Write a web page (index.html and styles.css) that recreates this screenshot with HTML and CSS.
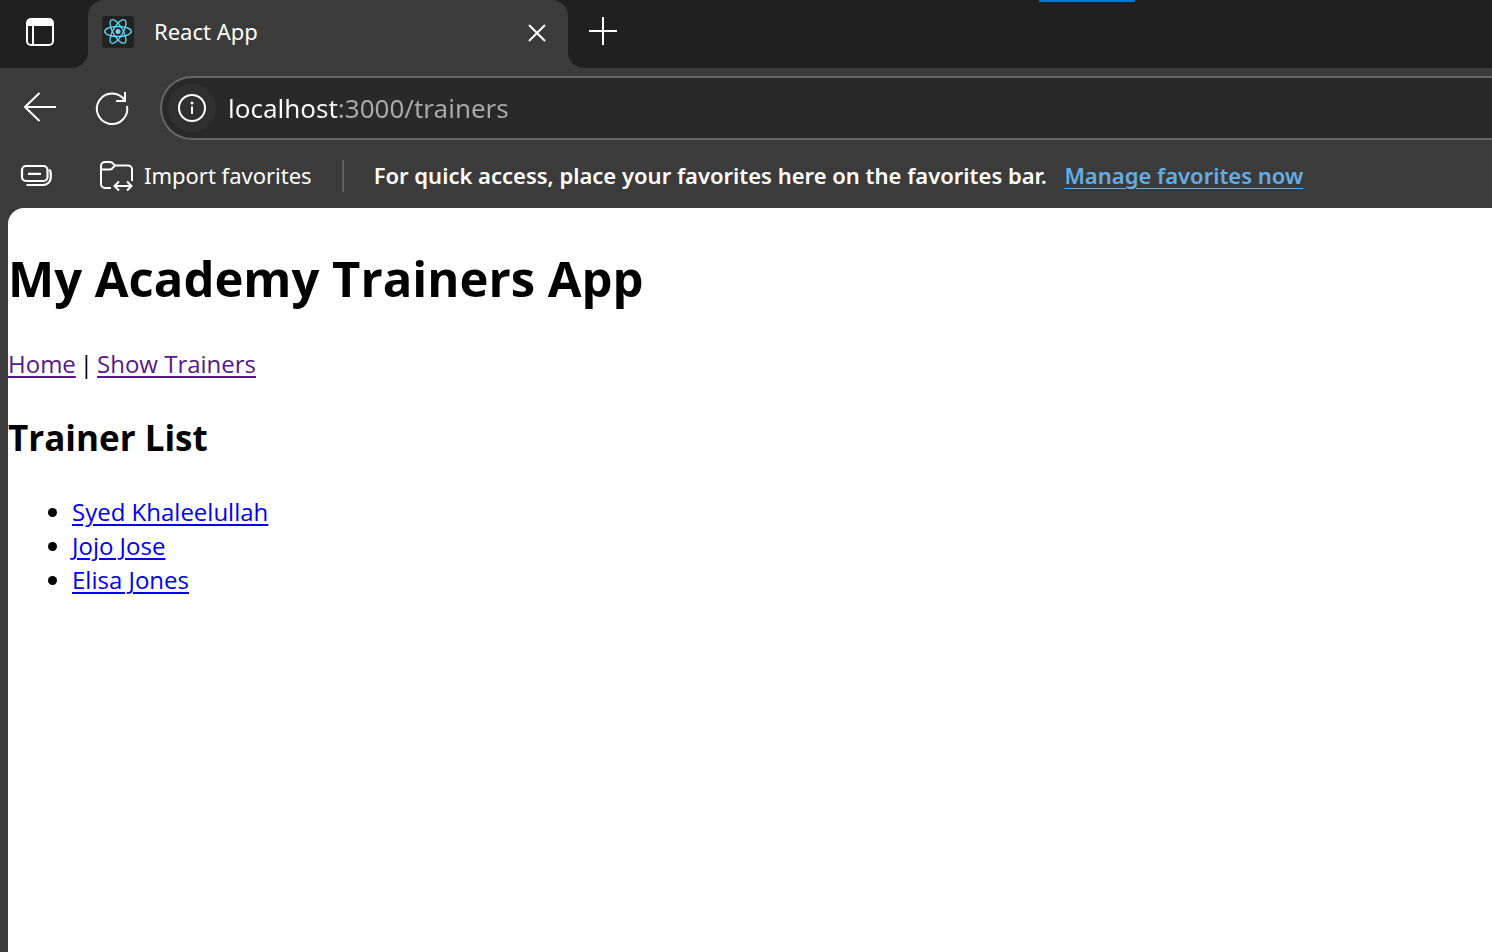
FILE: index.html
```html
<!DOCTYPE html>
<html lang="en">
<head>
<meta charset="utf-8">
<title>React App</title>
<link rel="stylesheet" href="styles.css">
</head>
<body>
<header class="browser">
  <div class="tab-strip">
    <div class="strip-start">
      <button class="icon-button" type="button" aria-label="Tab actions menu">
        <svg width="32" height="32" viewBox="0 0 32 32" fill="none" stroke="#fff"><rect x="3" y="3" width="26" height="26" rx="4" stroke-width="2"/><path d="M3 10V7a4 4 0 0 1 4-4h18a4 4 0 0 1 4 4v3z" fill="#fff" stroke="none"/><path d="M9 10v19" stroke-width="2"/></svg>
      </button>
    </div>
    <div class="tab-slot">
      <div class="tab">
        <svg class="favicon" width="32" height="32" viewBox="0 0 32 32" fill="none" stroke="#61dafb" stroke-width="1.3"><rect width="32" height="32" rx="4" fill="#222" stroke="none"/><circle cx="16" cy="15.500" r="2.500" fill="#61dafb" stroke="none"/><ellipse cx="16" cy="15.500" rx="13.300" ry="5"/><ellipse cx="16" cy="15.500" rx="13.300" ry="5" transform="rotate(60 16 15.500)"/><ellipse cx="16" cy="15.500" rx="13.300" ry="5" transform="rotate(120 16 15.500)"/></svg>
        <span class="tab-title">React App</span>
        <button class="icon-button" type="button" aria-label="Close tab">
          <svg width="32" height="32" viewBox="0 0 32 32" stroke="#fff" stroke-width="2"><path d="M8 9l16 16M24 9L8 25"/></svg>
        </button>
      </div>
    </div>
    <div class="strip-end">
      <button class="icon-button" type="button" aria-label="New tab">
        <svg width="32" height="32" viewBox="0 0 32 32" stroke="#fff" stroke-width="2"><path d="M16 2v28M2 16h28"/></svg>
      </button>
    </div>
    <span class="window-accent"></span>
  </div>

  <div class="toolbar">
    <button class="icon-button" type="button" aria-label="Back">
      <svg width="40" height="40" viewBox="0 0 40 40" fill="none" stroke="#fff" stroke-width="2"><path d="M19.500 5L5 19l14.500 14M5 19h31" stroke-linejoin="round"/></svg>
    </button>
    <button class="icon-button" type="button" aria-label="Refresh">
      <svg width="40" height="40" viewBox="0 0 40 40" fill="none" stroke="#fff" stroke-width="2"><path d="M35 18A15.200 15.200 0 1 1 32.800 12.500M33 4v9h-9"/></svg>
    </button>
    <div class="address-bar">
      <button class="site-info" type="button" aria-label="View site information">
        <svg width="32" height="32" viewBox="0 0 32 32" fill="none" stroke="#fff" stroke-width="2"><circle cx="16" cy="16" r="13"/><path d="M16 14.500v7.500"/><circle cx="16" cy="11" r="1.500" fill="#fff" stroke="none"/></svg>
      </button>
      <input class="address" type="text" aria-label="Address" value="localhost:3000/trainers" spellcheck="false">
    </div>
  </div>

  <div class="favorites-bar">
    <button class="icon-button" type="button" aria-label="Workspaces">
      <svg width="36" height="32" viewBox="0 0 36 32" fill="none" stroke="#fff" stroke-width="2.200"><rect x="4" y="6" width="25.500" height="15" rx="4"/><path d="M10 13.800h13M8.500 25H25a7.800 7.800 0 0 0 7.800-7.800V14q0-3-1.500-4.500"/></svg>
    </button>
    <button class="import-button" type="button">
      <svg width="36" height="36" viewBox="0 0 36 36" fill="none" stroke="#fff" stroke-width="2"><path d="M13 30H7a4 4 0 0 1-4-4V8a4 4 0 0 1 4-4h5q2 0 3.500 2l1.500 1.500h13a4 4 0 0 1 4 4V23M3 11.500h9q2 0 3-2l2-2"/><path d="M17 28h16M21 23.500L16.500 28l4.500 4.500M29 23.500l4.500 4.500-4.500 4.500"/></svg>
      <span>Import favorites</span>
    </button>
    <span class="divider"></span>
    <p class="hint">For quick access, place your favorites here on the favorites bar. <a class="manage-link" href="#">Manage favorites now</a></p>
  </div>
</header>

<main class="page">
  <h1 class="page-title">My Academy Trainers App</h1>
  <nav class="page-nav"><a class="visited" href="#">Home</a><span>|</span><a class="visited" href="#">Show Trainers</a></nav>
  <h2 class="list-title">Trainer List</h2>
  <ul class="trainers">
    <li><a class="trainer-link" href="#">Syed Khaleelullah</a></li>
    <li><a class="trainer-link" href="#">Jojo Jose</a></li>
    <li><a class="trainer-link" href="#">Elisa Jones</a></li>
  </ul>
</main>
</body>
</html>
```
FILE: styles.css
```css
* { box-sizing: border-box; }

body {
  margin: 0;
  min-height: 100vh;
  display: flex;
  flex-direction: column;
  background: #3b3b3b;
  color: #000;
  font-family: "Segoe UI", "Open Sans", "Noto Sans", sans-serif;
  font-size: 24px;
  line-height: 34px;
}

button {
  padding: 0;
  border: 0;
  background: none;
  color: inherit;
  font: inherit;
}

svg { display: block; flex: none; }

.browser {
  color: #fff;
  font-family: "Segoe UI", "Noto Sans", "Open Sans", sans-serif;
  font-size: 22px;
  line-height: 32px;
}

.tab-strip {
  position: relative;
  display: flex;
  height: 68px;
}

.strip-start {
  display: flex;
  align-items: center;
  flex: none;
  width: 88px;
  padding: 0 24px 4px;
  background: #202020;
  border-bottom-right-radius: 16px;
}

.tab-slot {
  flex: 0 1 480px;
  background: #202020;
}

.tab {
  display: flex;
  align-items: center;
  gap: 20px;
  height: 100%;
  padding: 0 15px 4px 14px;
  background: #3b3b3b;
  border-radius: 16px 16px 0 0;
}

.tab-title {
  flex: 1;
  padding-bottom: 2px;
}

.strip-end {
  flex: 1;
  display: flex;
  align-items: center;
  padding: 0 19px 6px;
  background: #202020;
  border-bottom-left-radius: 16px;
}

.window-accent {
  position: absolute;
  top: 0;
  left: 1039px;
  width: 96px;
  height: 2px;
  background: #0078d4;
}

.toolbar {
  display: flex;
  align-items: center;
  gap: 32px;
  padding: 8px 0 4px 20px;
}

.address-bar {
  flex: 1;
  display: flex;
  align-items: center;
  gap: 12px;
  height: 64px;
  padding: 0 0 0 6px;
  margin-left: -4px;
  background: #292929;
  border: 2px solid #666;
  border-right: 0;
  border-radius: 32px 0 0 32px;
}

.site-info {
  display: grid;
  place-items: center;
  width: 48px;
  height: 48px;
  border-radius: 50%;
  background: #303030;
}

.address {
  flex: 1;
  min-width: 0;
  height: 48px;
  padding: 0;
  border: 0;
  outline: 0;
  font: inherit;
  font-size: 26px;
  color: #aaa;
  background: linear-gradient(90deg, #fff 110px, #aaa 110px);
  -webkit-background-clip: text;
  background-clip: text;
  -webkit-text-fill-color: transparent;
}

.favorites-bar {
  display: flex;
  align-items: center;
  height: 64px;
  padding-left: 18px;
}

.import-button {
  display: flex;
  align-items: center;
  gap: 10px;
  margin-left: 44px;
}

.import-button span,
.hint { padding-bottom: 2px; }

.divider {
  width: 2px;
  height: 32px;
  margin: 0 30px;
  background: #606060;
}

.hint {
  margin: 0;
  font-weight: 600;
  white-space: nowrap;
}

.manage-link {
  margin-left: 12px;
  color: #63ade5;
  text-decoration-thickness: 1px;
  text-underline-offset: 4px;
}

.page {
  flex: 1;
  margin-left: 8px;
  padding-top: 36px;
  background: #fff;
  border-top-left-radius: 16px;
}

.page-title {
  margin: 0 0 35px;
  font-size: 49px;
  line-height: 68px;
}

.page-nav {
  display: flex;
  gap: 4px;
  margin-bottom: 31px;
}

.visited { color: #551a8b; }

.list-title {
  margin: 0 0 31px;
  font-size: 35px;
  line-height: 52px;
}

.trainers {
  margin: 0;
  padding-left: 64px;
}

.trainer-link { color: #00e; }

.visited,
.trainer-link {
  text-decoration-thickness: 2px;
  text-underline-offset: 3px;
}
```
